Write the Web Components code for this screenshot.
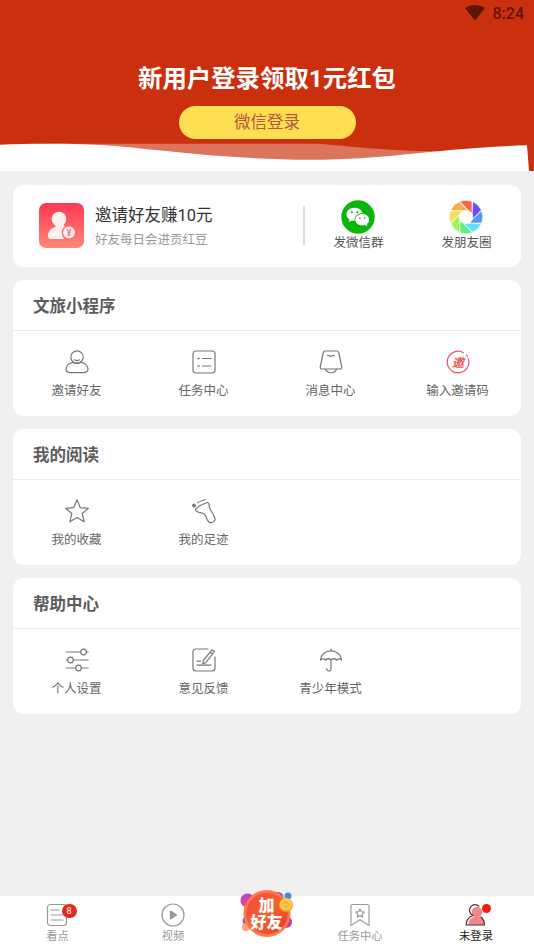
<!DOCTYPE html>
<html lang="zh-CN">
<head>
<meta charset="utf-8">
<title>我的</title>
<style>
body{margin:0;background:#f0f0f0;font-family:Roboto,"Noto Sans CJK SC",sans-serif;color:#666}
</style>
</head>
<body>
<app-page></app-page>
<script>
const ICONS={
person:'<circle cx="12" cy="7" r="6.2"/><path d="M7.5 12.3C3.300 13.600 1 16.500 1 19.600 1 22 3 22.600 6 22.600h12c3 0 5-.6 5-3 0-3.100-2.300-6-6.500-7.300-2.500 1.300-6.500 1.300-9 0z"/><path d="M9.500 9.800c1.500 1 3.500 1 5 0"/>',
list:'<rect x="1" y="1" width="22" height="22" rx="3"/><path d="M10.500 8.500h8.500M10.500 16h8.500"/><path d="M6 8.500h1.200M6 16h1.200" stroke-width="1.400"/>',
bell:'<path d="M6.200 1h11.600q1.500 0 1.900 1.500l3 14q.4 2.500-1.700 2.500H3q-2.100 0-1.700-2.500l3-14Q4.700 1 6.200 1z"/><path d="M8.500 5.200c2 1 5 1 7 0M6.500 19.300c2 4.600 9 4.600 11 0"/>',
invite:'<path d="M17.500 2.700A10.800 10.800 0 1 0 22.300 8.600" stroke="#e95761"/><path d="M20.500 5l1 1.500" stroke="#e95761"/><text x="12" y="16.500" text-anchor="middle" font-size="12" font-weight="700" font-style="italic" fill="#e95761" stroke="none">邀</text>',
star:'<path d="M12 .8l3.300 7.900 8.100.6-6.200 5.200 2 8.300L12 18.400l-7.200 4.400 2-8.300L.6 9.300l8.100-.6z"/>',
foot:'<path d="M3.800 9.800C6.500 7.300 10.500 5 14.500 3.700c1.700-.5 2.300.3 2.500 1.800.2 2.400.8 4.300 2 6.200 1.300 2.200 2.800 4.300 3.700 6.800.8 2.300-.2 4.300-2.300 5-2 .5-4-.2-4.900-2.200-1.100-2.400-1.400-4.700-3.300-6.300-1.900-1.500-4.700-1.200-6.900-2.300-1.400-.7-2.100-1.800-1.500-2.900z"/><circle cx="2" cy="6.500" r="1.300" fill="#777"/><path d="M5.600 3.700l1.600-.9M8.600 2.200l4.200-1.500"/>',
sliders:'<path d="M1 4h14.700M21.500 4h1.700M1 12h1.500M8.500 12h14.700M1 20h9.500M16.500 20h6.700"/><circle cx="18.600" cy="4" r="2.800"/><circle cx="5.500" cy="12" r="2.800"/><circle cx="13.500" cy="20" r="2.800"/>',
edit:'<path d="M16 1H4Q1 1 1 4v16q0 3 3 3h16q3 0 3-3V9"/><path d="M5 13.200h3.500M5 17.200h14"/><path d="M20 1.800l2.400 1.700-8.600 11.200-3 1.200.5-3.400zM18.300 4.200l2.300 1.800"/>',
umbrella:'<path d="M1.500 12C2 6.300 6.500 2.800 12 2.800S22 6.300 22.500 12c-1.500-1.500-3.300-1.500-5 0-1.500-1.500-3.700-1.500-5.500 0-1.800-1.500-4-1.500-5.500 0-1.700-1.500-3.500-1.500-5 0zM12 1v1.800M12 12v8.500c0 3.300-4.300 3.300-4.300.2"/>',
news:'<rect x="1.500" y="1.500" width="19" height="21" rx="2.800"/><path d="M5 7h8M5 12h12M5 17h12"/>',
play:'<circle cx="12" cy="12" r="11"/><path d="M9.500 8l6 4-6 4z" fill="#999"/>',
bookmark:'<path d="M4.500 1.500h15q2 0 2 2v19L12 16.800 2.500 22.500v-19q0-2 2-2z" transform="translate(.6)scale(.95 1)"/><path d="M12 6l1.300 2.700 3 .4-2.200 2 .6 2.900-2.700-1.400L9.300 14l.6-2.900-2.200-2 3-.4z"/>',
me:'<path d="M4.500 22c0-5 2.500-8.500 8-8.500s8.500 3.500 8.500 8.500z" fill="#f28688" stroke="none"/><circle cx="13" cy="9" r="5.300" fill="#f28688" stroke="none"/><path d="M15 3.200A5.600 5.600 0 1 0 9.200 12.500C4.500 14 2.300 17.500 2.200 22H20.500c-.1-3-1-6-3.600-8" stroke="#4a2c30"/>'
};
function define(name,markup){
  const t=document.createElement('template');
  customElements.define(name,class extends HTMLElement{
    constructor(){super();this.attachShadow({mode:'open'})}
    connectedCallback(){
      t.innerHTML=typeof markup==='function'?markup(this):markup;
      this.shadowRoot.replaceChildren(t.content.cloneNode(true));
    }
  });
}
define('line-icon',el=>`<style>:host{display:block;width:24px;height:24px}svg{display:block;width:100%;height:100%;overflow:visible}</style>
<svg viewBox="0 0 24 24" fill="none" stroke="currentColor" stroke-width="1.200" stroke-linejoin="round" stroke-linecap="round">${ICONS[el.getAttribute('name')]}</svg>`);

define('status-bar',`<style>:host{display:flex;justify-content:flex-end;align-items:center;height:28px;padding-right:10px;gap:8px;color:#5d1607;font:500 16px/30px Roboto,sans-serif;box-sizing:border-box}svg{margin-top:-2px}</style>
<svg width="20" height="16" viewBox="0 0 20 16"><path d="M0 3Q10-2.800 20 3L10 15.500z" fill="#5d1607"/></svg><span>8:24</span>`);

define('login-banner',`<style>:host{display:flex;flex-direction:column;height:171px;background:#cb300e;overflow:hidden}
h1{margin:33px 0 0;height:36px;font-size:24.400px;line-height:36px;font-weight:700;color:#fff;text-align:center}
button{display:block;margin:9px auto 0;width:177px;height:33px;border:0;padding:0;border-radius:17px;background:#fedf52;color:#b75640;font:16.500px/34px Roboto,"Noto Sans CJK SC",sans-serif}
svg{display:block;margin-top:auto;flex:none}</style>
<status-bar></status-bar><h1>新用户登录领取1元红包</h1><button>微信登录</button>
<svg width="534" height="28" viewBox="0 0 534 28"><path d="M50 .7H318C350 3 380 7.500 440 8.500L420 22H200z" fill="#dc735b"/><path d="M0 1.700C30 .3 70 .3 100 2 150 5 220 16.500 310 16.700 390 16.500 430 5.500 527 2.200L529 28H0z" fill="#fff"/></svg>`);

define('ui-card',`<style>:host{display:block;background:#fff;border-radius:11px;overflow:hidden}</style><slot></slot>`);

define('gift-icon',`<style>:host{display:block;width:45px;height:45px;margin-bottom:2px}svg{display:block}</style>
<svg width="45" height="45" viewBox="0 0 45 45"><defs><linearGradient id="g" x2="0" y2="1"><stop stop-color="#fc3856"/><stop offset="1" stop-color="#ff8874"/></linearGradient></defs><rect width="45" height="45" rx="7" fill="url(#g)"/><g fill="#fff0ef"><circle cx="20" cy="16" r="7.300"/><path d="M16.500 21.500h7.500l3 3c-4 2-4.500 7-2 11.500H12c-4 0-3.500-5-1.500-8 1.500-2.300 4-3.500 6-4z"/><circle cx="30" cy="29.500" r="7.300" fill="#fd6c6a"/><circle cx="30" cy="29.500" r="6"/></g><text x="30" y="33" text-anchor="middle" font-family="Roboto" font-size="9.500" font-weight="500" fill="#fc6670">¥</text></svg>`);

define('wechat-icon',`<style>:host,svg{display:block}</style>
<svg width="34" height="34" viewBox="0 0 34 34"><circle cx="17" cy="17" r="16.700" fill="#09b70b"/><path d="M13.500 7.800c-4.600 0-8 2.900-8 6.500 0 2.100 1.100 3.900 3 5.100l-.7 2.500 2.900-1.500c1 .3 2 .4 3.100.4C12.800 16 17 13 21.500 13.200 20.700 10 17.500 7.800 13.500 7.800z" fill="#fff"/><path d="M21.300 13.900c-4 0-7 2.600-7 5.800s3 5.700 7 5.700c.9 0 1.700-.1 2.500-.4l2.500 1.300-.6-2.200c1.600-1.100 2.500-2.600 2.500-4.400 0-3.200-3-5.800-6.900-5.800z" fill="#fff"/><g fill="#09a70b"><circle cx="10.800" cy="12.300" r="1"/><circle cx="16.300" cy="12.300" r="1"/><circle cx="18.900" cy="18" r=".85"/><circle cx="23.700" cy="18" r=".85"/></g></svg>`);

define('moments-icon',()=>{
  const colors=['#ee6c4b','#6652ed','#5695ee','#62dff9','#62f07d','#a5f35a','#f7dd53','#f5ac4a'];
  const pt=(r,a)=>{a=a*Math.PI/180;return (17+r*Math.cos(a)).toFixed(2)+' '+(17+r*Math.sin(a)).toFixed(2)};
  const blades=colors.map((c,i)=>{const a=-112+i*45;return `<path fill="${c}" d="M${pt(16.8,a)}A16.800 16.800 0 0 1 ${pt(16.8,a+43)}L${pt(7.3,a+82)}L${pt(7,a+40)}z"/>`}).join('');
  return `<style>:host,svg{display:block}</style><svg width="34" height="34" viewBox="0 0 34 34" stroke="#fff" stroke-width=".7">${blades}<circle cx="17" cy="17" r="6.400" fill="#fff" stroke="none"/></svg>`});

define('share-action',`<style>:host{display:flex;flex-direction:column;align-items:center;width:108px;font-size:12.500px;line-height:18px;color:#555}::slotted(*){margin:0 1px 0 0}</style><slot name="icon"></slot><slot></slot>`);

define('invite-row',`<style>:host{display:flex;align-items:center;height:82px;padding-left:26px}
.t{margin-left:11px;width:208px;padding-top:2px;display:flex;flex-direction:column}
b{font-weight:400;font-size:16.500px;line-height:25px;color:#333}small{font-size:12.500px;line-height:24px;color:#999}
i{width:1.500px;height:39px;margin-bottom:2px;background:#ddd}</style>
<gift-icon></gift-icon><div class="t"><b>邀请好友赚10元</b><small>好友每日会进贡红豆</small></div><i></i>
<share-action><wechat-icon slot="icon"></wechat-icon>发微信群</share-action><share-action><moments-icon slot="icon"></moments-icon>发朋友圈</share-action>`);

define('menu-item',el=>`<style>:host{display:flex;flex-direction:column;align-items:center;gap:8px;font-size:12.500px;line-height:18px;color:#666}line-icon{color:#777}</style><line-icon name="${el.getAttribute('icon')}"></line-icon><span><slot></slot></span>`);

define('menu-section',el=>`<style>:host{display:block}
h2{margin:0;height:50px;padding-left:20px;font-size:16.500px;line-height:53px;font-weight:700;color:#5c5c5c;border-bottom:1px solid #ebebeb}
.g{display:grid;grid-template-columns:repeat(4,127px);padding-top:19px;height:66px}</style>
<ui-card><h2>${el.getAttribute('heading')}</h2><div class="g"><slot></slot></div></ui-card>`);

define('tab-item',el=>`<style>:host{display:flex;flex-direction:column;align-items:center;padding-top:7px;gap:1px;font-size:11.300px;line-height:18px;color:#999}
:host([active]){color:#222}.i{position:relative}
.b{position:absolute;left:16px;top:1px;width:15px;height:14px;border-radius:7px;background:#df2c1c;color:#fff;font:9px/14px Roboto,sans-serif;text-align:center}
.d{position:absolute;left:18px;top:1px;width:9px;height:9px;border-radius:5px;background:#e5210f}</style>
<div class="i"><line-icon name="${el.getAttribute('icon')}"></line-icon>${el.hasAttribute('badge')?`<span class="b">${el.getAttribute('badge')}</span>`:''}${el.hasAttribute('active')?'<span class="d"></span>':''}</div><span><slot></slot></span>`);

define('add-friend',`<style>:host{display:grid;justify-content:center;margin-top:-8px}svg,.t{grid-area:1/1}svg{display:block;overflow:visible}
.t{z-index:1;width:34px;justify-self:center;box-sizing:border-box;padding-top:8px;color:#fff;text-align:center;font:900 16px/17px "Noto Sans CJK SC",sans-serif;white-space:pre-line}</style>
<svg width="56" height="54" viewBox="0 0 56 54"><defs><linearGradient id="r" x2="1" y2="1"><stop stop-color="#f04540"/><stop offset=".5" stop-color="#f5632e"/><stop offset="1" stop-color="#ee2d2e"/></linearGradient><linearGradient id="p" y2="1" x2="0"><stop stop-color="#b545cf"/><stop offset="1" stop-color="#f0437f"/></linearGradient></defs>
<circle cx="8.500" cy="12.500" r="7" fill="url(#p)"/><circle cx="39" cy="9.500" r="5.500" fill="#8848cf"/><circle cx="49" cy="8" r="3.500" fill="#448be9"/><circle cx="8" cy="33" r="4.500" fill="#8c55c9"/><circle cx="7" cy="39" r="4" fill="#ffa17e"/><circle cx="47" cy="34" r="6" fill="#c04194"/>
<circle cx="28" cy="25.500" r="23.500" fill="#fb7a48"/><circle cx="28" cy="25.500" r="20.700" fill="url(#r)"/>
<circle cx="47" cy="17" r="7" fill="#f29b29"/><circle cx="47" cy="16.300" r="6.300" fill="#ffc64d"/><path d="M44 16.500l3-3 3 3-3 3z" fill="none" stroke="#f29b29"/></svg>
<div class="t">加
好友</div>`);

define('tab-bar',`<style>:host{display:grid;grid-template-columns:115px 116px 71px 116px 116px;height:53px;background:#fff}</style>
<tab-item icon="news" badge="8">看点</tab-item><tab-item icon="play">视频</tab-item><add-friend></add-friend><tab-item icon="bookmark">任务中心</tab-item><tab-item icon="me" active>未登录</tab-item>`);

define('app-page',`<style>:host{display:flex;flex-direction:column;width:534px;height:949px}
main{flex:1;display:flex;flex-direction:column;gap:13px;padding:14px 13px 0}</style>
<login-banner></login-banner>
<main><ui-card><invite-row></invite-row></ui-card>
<menu-section heading="文旅小程序"><menu-item icon="person">邀请好友</menu-item><menu-item icon="list">任务中心</menu-item><menu-item icon="bell">消息中心</menu-item><menu-item icon="invite">输入邀请码</menu-item></menu-section>
<menu-section heading="我的阅读"><menu-item icon="star">我的收藏</menu-item><menu-item icon="foot">我的足迹</menu-item></menu-section>
<menu-section heading="帮助中心"><menu-item icon="sliders">个人设置</menu-item><menu-item icon="edit">意见反馈</menu-item><menu-item icon="umbrella">青少年模式</menu-item></menu-section></main>
<tab-bar></tab-bar>`);
</script>
</body>
</html>
